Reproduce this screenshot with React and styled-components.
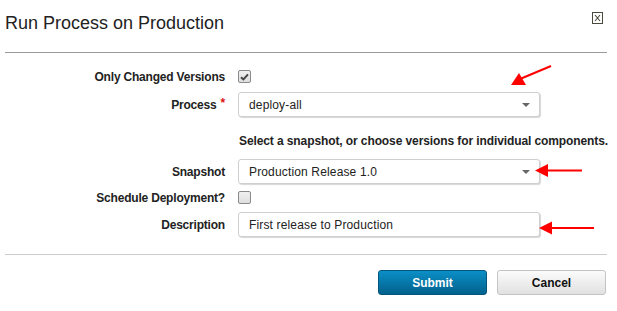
import React from "react";
import styled, { createGlobalStyle } from "styled-components";

const Global = createGlobalStyle`
  html, body { margin: 0; padding: 0; background: #fff; }
  body {
    font-family: "Liberation Sans", Arial, sans-serif;
    width: 617px;
    height: 311px;
    overflow: hidden;
  }
`;

const Page = styled.div`
  position: relative;
  width: 617px;
  height: 311px;
  padding: 0 10px 0 5px;
  box-sizing: border-box;
`;

const Header = styled.div`
  height: 53px;
  border-bottom: 1px solid #9a9a9a;
  display: flex;
  justify-content: space-between;
  align-items: flex-start;
  padding-top: 12px;
  box-sizing: border-box;
`;

const Title = styled.h1`
  margin: 1px 0 0;
  font-size: 18px;
  line-height: 20px;
  font-weight: normal;
  color: #222;
`;

const Close = styled.button`
  margin: 0 4px 0 0;
  padding: 0;
  width: 11px;
  height: 12px;
  border: none;
  background: none;
  display: block;
  cursor: pointer;
`;

const Form = styled.div`
  padding-top: 15px;
`;

const Row = styled.div`
  display: grid;
  grid-template-columns: 220px 302px;
  column-gap: 13px;
  align-items: center;
  height: ${(p) => p.$h}px;
  margin-top: ${(p) => p.$mt}px;
`;

const Label = styled.div`
  text-align: right;
  font-size: 12px;
  font-weight: bold;
  color: #222;
  letter-spacing: -0.2px;
  white-space: nowrap;
`;

const Req = styled.span`
  color: #e01010;
  margin-left: 4px;
  position: relative;
  top: -2px;
`;

const Box = styled.div`
  height: 25px;
  box-sizing: border-box;
  border: 1px solid #cfcfcf;
  border-radius: 3px;
  box-shadow: 1px 1px 1px rgba(0, 0, 0, 0.16);
  padding: 0 9px 0 10px;
  display: flex;
  align-items: center;
  justify-content: space-between;
  font-size: 12px;
  letter-spacing: 0.15px;
  color: #222;
  background: #fff;
`;

const Caret = styled.span`
  width: 0;
  height: 0;
  border-left: 4px solid transparent;
  border-right: 4px solid transparent;
  border-top: 4px solid #666;
`;

const Check = styled.span`
  width: 13px;
  height: 13px;
  box-sizing: border-box;
  border: 1px solid #8a8a8a;
  border-radius: 2px;
  background: linear-gradient(#f0f0f0, #dedede);
  display: flex;
  align-items: center;
  justify-content: center;
`;

const Help = styled.div`
  grid-column: 2 / span 1;
  font-size: 12px;
  font-weight: bold;
  color: #222;
  white-space: nowrap;
  padding-left: 1px;
  letter-spacing: -0.1px;
`;

const Footer = styled.div`
  margin-top: 17px;
  border-top: 1px solid #cdcdcd;
  padding: 15px 1px 0 0;
  display: flex;
  justify-content: flex-end;
  gap: 10px;
`;

const Button = styled.button`
  width: 109px;
  height: 25px;
  box-sizing: border-box;
  border-radius: 3px;
  font-family: "Liberation Sans", Arial, sans-serif;
  font-size: 12px;
  font-weight: bold;
  padding: 0;
  cursor: pointer;
  border: 1px solid ${(p) => (p.$primary ? "#05567c" : "#c4c4c4")};
  color: ${(p) => (p.$primary ? "#fff" : "#111")};
  background: ${(p) =>
    p.$primary
      ? "linear-gradient(#0b8fc6, #02618d)"
      : "linear-gradient(#fbfbfb, #e1e1e1)"};
`;

const Overlay = styled.svg`
  position: absolute;
  left: 0;
  top: 0;
  pointer-events: none;
`;

function Checkbox({ checked }) {
  return (
    <Check>
      {checked && (
        <svg width="9" height="8" viewBox="0 0 9 8">
          <path d="M1 4.2 L3.4 6.5 L8 1.3" fill="none" stroke="#444" strokeWidth="1.9" />
        </svg>
      )}
    </Check>
  );
}

export default function App() {
  return (
    <Page>
      <Global />
      <Header>
        <Title>Run Process on Production</Title>
        <Close aria-label="Close">
          <svg width="11" height="12" viewBox="0 0 11 12">
            <rect x="0.5" y="0.5" width="10" height="11" fill="none" stroke="#4a4a3c" />
            <path d="M3 3 L8 9 M8 3 L3 9" stroke="#4a4a3c" strokeWidth="1.1" />
          </svg>
        </Close>
      </Header>
      <Form>
        <Row $h={17} $mt={0}>
          <Label>Only Changed Versions</Label>
          <Checkbox checked />
        </Row>
        <Row $h={25} $mt={7}>
          <Label>
            Process<Req>*</Req>
          </Label>
          <Box>
            deploy-all
            <Caret />
          </Box>
        </Row>
        <Row $h={16} $mt={16}>
          <Help>Select a snapshot, or choose versions for individual components.</Help>
        </Row>
        <Row $h={25} $mt={10}>
          <Label>Snapshot</Label>
          <Box>
            Production Release 1.0
            <Caret />
          </Box>
        </Row>
        <Row $h={17} $mt={5}>
          <Label>Schedule Deployment?</Label>
          <Checkbox />
        </Row>
        <Row $h={25} $mt={6}>
          <Label>Description</Label>
          <Box>First release to Production</Box>
        </Row>
      </Form>
      <Footer>
        <Button $primary>Submit</Button>
        <Button>Cancel</Button>
      </Footer>
      <Overlay width="617" height="311" viewBox="0 0 617 311">
        <line x1="520" y1="79" x2="551" y2="66" stroke="#f00" strokeWidth="2" />
        <polygon points="511,85 519,73 526,85" fill="#f00" />
        <line x1="546" y1="170.5" x2="582" y2="170.5" stroke="#f00" strokeWidth="2" />
        <polygon points="535,170.5 548,164 548,177" fill="#f00" />
        <line x1="550" y1="228" x2="594" y2="228" stroke="#f00" strokeWidth="2" />
        <polygon points="539,228 552,221.5 552,234.5" fill="#f00" />
      </Overlay>
    </Page>
  );
}
